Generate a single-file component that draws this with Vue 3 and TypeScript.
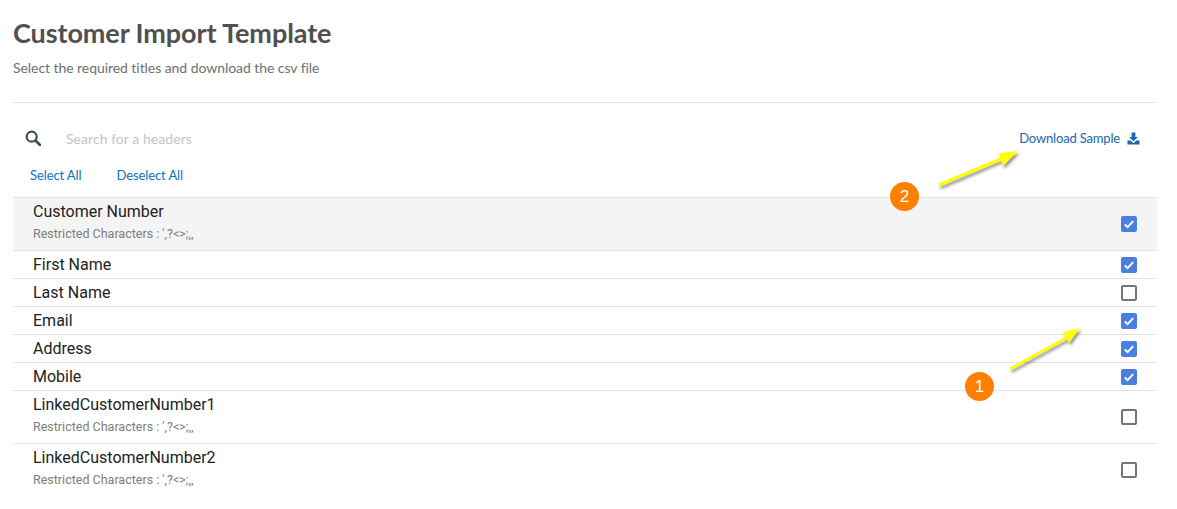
<script setup lang="ts">
interface Row { name: string; checked: boolean; restricted?: boolean; hover?: boolean }
const rows: Row[] = [
  { name: 'Customer Number', checked: true, restricted: true, hover: true },
  { name: 'First Name', checked: true },
  { name: 'Last Name', checked: false },
  { name: 'Email', checked: true },
  { name: 'Address', checked: true },
  { name: 'Mobile', checked: true },
  { name: 'LinkedCustomerNumber1', checked: false, restricted: true },
  { name: 'LinkedCustomerNumber2', checked: false, restricted: true },
]
</script>

<template>
  <div class="page">
    <header class="head">
      <h1>Customer Import Template</h1>
      <p>Select the required titles and download the csv file</p>
    </header>
    <div class="search">
      <svg class="search-icon" viewBox="0 0 16 16" width="16" height="16">
        <circle cx="6.7" cy="6.7" r="5" fill="none" stroke="#3f4a55" stroke-width="2.2" />
        <path d="M10.5 10.5L15 15" stroke="#3f4a55" stroke-width="2.6" stroke-linecap="round" />
      </svg>
      <span class="placeholder">Search for a headers</span>
      <a class="download">
        Download Sample
        <svg viewBox="0 0 14 14" width="13" height="13">
          <path d="M5 0.5h4v4.8h2.8L7 10 2.2 5.3H5z" fill="#1a68ae" />
          <path d="M0.5 9.2h3.4L7 12l3.1-2.8h3.4v4.3H0.5z" fill="#1a68ae" />
        </svg>
      </a>
    </div>
    <div class="actions">
      <a>Select All</a>
      <a>Deselect All</a>
    </div>
    <ul class="list">
      <li v-for="r in rows" :key="r.name" :class="{ hover: r.hover, tall: r.restricted }">
        <div class="label">
          <div class="name">{{ r.name }}</div>
          <div v-if="r.restricted" class="sub">Restricted Characters : ',?&lt;&gt;;,,</div>
        </div>
        <span class="box" :class="{ on: r.checked }">
          <svg v-if="r.checked" viewBox="0 0 16 16" width="16" height="16">
            <path d="M3.8 8.4l2.8 2.7 5.6-6" fill="none" stroke="#fff" stroke-width="2" />
          </svg>
        </span>
      </li>
    </ul>

    <svg class="arrows" viewBox="0 0 1177 509" width="1177" height="509">
      <defs>
        <filter id="sh" x="-20%" y="-20%" width="140%" height="140%">
          <feDropShadow dx="1.5" dy="2.5" stdDeviation="1.4" flood-color="#000" flood-opacity="0.45" />
        </filter>
      </defs>
      <g filter="url(#sh)">
        <path d="M939 185L1003 158" stroke="#ffff00" stroke-width="3" />
        <path d="M1018 151L1003 166 999 153z" fill="#ffff00" />
      </g>
      <g filter="url(#sh)">
        <path d="M1010 369L1068 337" stroke="#ffff00" stroke-width="3" />
        <path d="M1080 328L1069 343 1063 332z" fill="#ffff00" />
      </g>
    </svg>
    <span class="badge b2">2</span>
    <span class="badge b1">1</span>
  </div>
</template>

<style scoped>
.page {
  position: relative;
  width: 1177px;
  height: 509px;
  overflow: hidden;
  padding: 0 20px 0 13px;
  box-sizing: border-box;
  background: #fff;
  font-family: Lato, sans-serif;
}
.head {
  height: 102px;
  border-bottom: 1px solid #e2e2e2;
  box-sizing: content-box;
  overflow: hidden;
}
h1 {
  margin: 16px 0 0;
  font-size: 27px;
  letter-spacing: -0.08px;
  line-height: 33px;
  font-weight: 700;
  color: #505050;
}
.head p {
  margin: 10px 0 0;
  font-size: 14px;
  letter-spacing: -0.06px;
  line-height: 17px;
  color: #6f6f6f;
}
.search {
  display: flex;
  align-items: center;
  height: 36px;
  margin-top: 17px;
  padding: 0 17px 0 12px;
}
.search-icon {
  flex: none;
}
.placeholder {
  margin-left: 25px;
  font-size: 14px;
  letter-spacing: 0.05px;
  color: #c4c4c4;
}
.download {
  margin-left: auto;
  display: flex;
  align-items: center;
  gap: 7px;
  font-size: 13px;
  letter-spacing: -0.17px;
  color: #1a68ae;
}
.actions {
  display: flex;
  gap: 35px;
  height: 25px;
  align-items: center;
  padding: 0 0 0 17px;
  margin-top: 6px;
  font-size: 13px;
  letter-spacing: -0.1px;
  color: #0a72c2;
}
.list {
  list-style: none;
  margin: 10px 0 0;
  padding: 0;
  font-family: Roboto, sans-serif;
}
li {
  display: flex;
  align-items: center;
  justify-content: space-between;
  height: 28px;
  box-sizing: border-box;
  padding: 0 20px;
  border-top: 1px solid #dfe3e6;
}
li.tall {
  height: 53px;
}
li.tall .label {
  margin-bottom: 6px;
}
li.hover {
  background: #f4f4f4;
}
.name {
  font-size: 16px;
  line-height: 19px;
  color: #222;
}
.sub {
  margin-top: 5px;
  font-size: 12.5px;
  line-height: 15px;
  color: #7d7d7d;
  font-family: Roboto, sans-serif;
}
.box {
  width: 16px;
  height: 16px;
  box-sizing: border-box;
  border: 2px solid #757575;
  border-radius: 2px;
  display: block;
  position: relative;
}
.box.on {
  background: #4a7fdf;
  border: 0;
}
.box svg {
  display: block;
}
.arrows {
  position: absolute;
  left: 0;
  top: 0;
  pointer-events: none;
}
.badge {
  position: absolute;
  width: 29.5px;
  height: 29.5px;
  border-radius: 50%;
  background: #ff7f00;
  color: #fff;
  font-family: "Liberation Sans", sans-serif;
  font-size: 17px;
  line-height: 29.5px;
  text-align: center;
}
.b2 { left: 889.75px; top: 181.75px; }
.b1 { left: 964.75px; top: 371.75px; }
</style>
